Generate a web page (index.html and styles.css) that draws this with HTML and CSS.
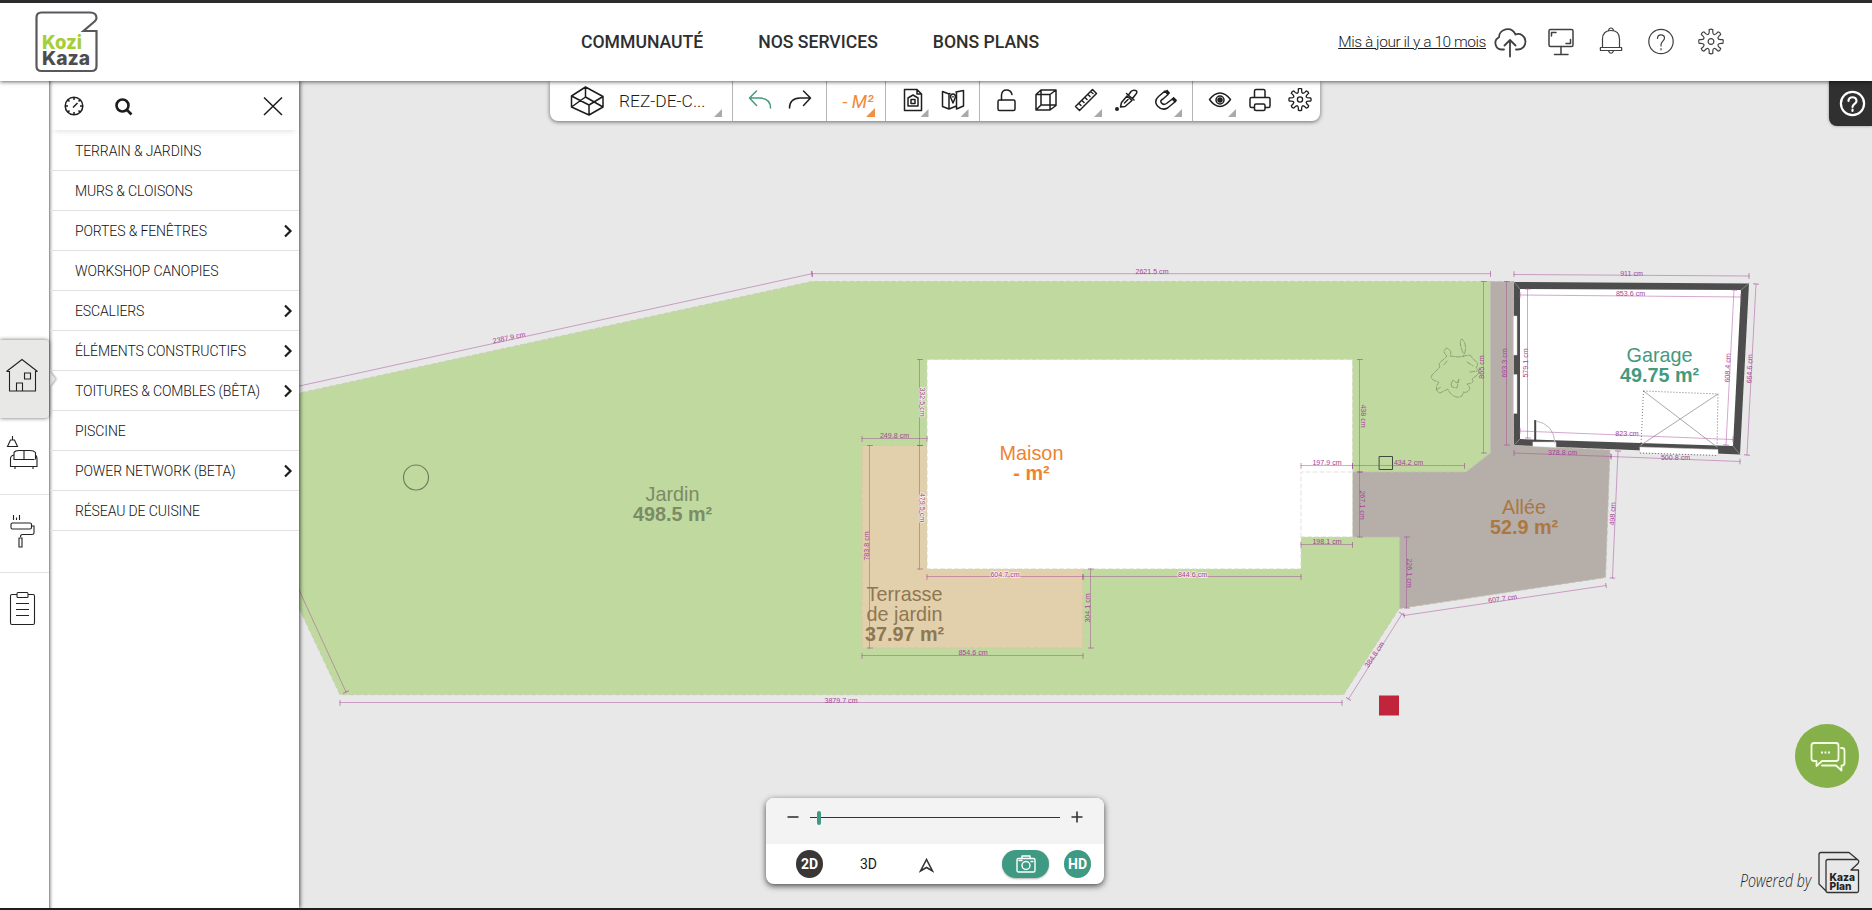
FILE: index.html
```html
<!DOCTYPE html>
<html lang="fr">
<head>
<meta charset="utf-8">
<title>Kozikaza - Plan</title>
<link rel="stylesheet" href="styles.css">
</head>
<body>
<svg class="defs" aria-hidden="true">
  <symbol id="gear" viewBox="-14 -14 28 28">
    <path d="M1.88-11.85C1.33-6.26 3.49-5.37 7.05-9.71Q9.2-9.2 9.71-7.05C5.37-3.49 6.26-1.33 11.85-1.88Q13 0 11.85 1.88C6.26 1.33 5.37 3.49 9.71 7.05Q9.2 9.2 7.05 9.71C3.49 5.37 1.33 6.26 1.88 11.85Q0 13-1.88 11.85C-1.33 6.26-3.49 5.37-7.05 9.71Q-9.2 9.2-9.71 7.05C-5.37 3.49-6.26 1.33-11.85 1.88Q-13 0-11.85-1.88C-6.26-1.33-5.37-3.49-9.71-7.05Q-9.2-9.2-7.05-9.71C-3.49-5.37-1.33-6.26-1.88-11.85Q0-13 1.88-11.85Z"/>
    <circle r="2.9"/>
  </symbol>
  <symbol id="chevron" viewBox="0 0 10 14"><path d="M2 1.500L7.500 7L2 12.500"/></symbol>
</svg>

<header class="header">
  <svg class="logo" width="64" height="64" viewBox="35 10 64 64">
    <path class="logo-frame" d="M83.500 31L96.500 31V66Q96.500 71 91.500 71H41.500Q36.500 71 36.500 66V17.500Q36.500 12.500 41.500 12.500H90Q96.500 12.500 96.500 18Q96.500 20 94.500 21.500Z"/>
    <text class="logo-text logo-green" x="42" y="49" textLength="40" lengthAdjust="spacingAndGlyphs">Kozi</text>
    <text class="logo-text logo-grey" x="42" y="64.500" textLength="48" lengthAdjust="spacingAndGlyphs">Kaza</text>
  </svg>
  <nav class="nav">
    <a>COMMUNAUTÉ</a><a>NOS SERVICES</a><a>BONS PLANS</a>
  </nav>
  <div class="account">
    <a class="updated">Mis à jour il y a 10 mois</a>
    <svg class="cloud" width="34" height="32" viewBox="0 0 34 32"><path d="M11 23.500H8.500A6.500 6.500 0 0 1 6 11.200C6 3.500 18-1 22.500 8.500C27 6.500 32.500 10 32.500 15.500C32.500 20 29.500 23.500 25 23.500H23M17 30.500V14.500M11.500 19.500L17 14L22.500 19.500"/></svg>
    <svg class="icon-thin bold" width="50" height="32" viewBox="0 0 50 32"><rect x="13" y="4.500" width="24" height="17" rx="1.500"/><path d="M25 21.500V29.500M18.500 29.500H32M15.500 11V7.500H20M34.500 14.500V18.500H30"/></svg>
    <svg class="icon-thin" width="50" height="32" viewBox="0 0 50 32"><path d="M14.500 22.500H35.500Q36 24 35.500 25.500H14.500Q14 24 14.500 22.500ZM16.500 22.500V14C16.500 8 20 5.500 25 5.500S33.500 8 33.500 14V22.500M22.500 5.500Q23 3 25 3T27.500 5.500M22.500 26Q25 30.500 27.500 26"/></svg>
    <svg class="icon-thin" width="50" height="32" viewBox="0 0 50 32"><circle cx="25" cy="16.500" r="12.200"/><path d="M21.500 13.500C21.500 8.500 28.500 9 28.500 13C28.500 16 25 16.500 25 20V21M25 23.500V24.800"/></svg>
    <svg class="icon-thin" width="50" height="32" viewBox="0 0 50 32"><use href="#gear" x="11" y="2.500" width="28" height="28"/></svg>
  </div>
</header>

<main class="workspace">
  <svg class="plan" viewBox="0 81 1872 827" width="1872" height="827">
    <defs>
      <marker id="tick" markerWidth="2" markerHeight="6" refX="1" refY="3" orient="auto" markerUnits="userSpaceOnUse"><path class="tick" d="M1 0V6"/></marker>
    </defs>
    <path class="garden" d="M240 406L812 281.500H1490.500V453L1466 472H1352.500V537H1399.500V608L1343.500 694.700H340L240 483Z"/>
    <path class="alley" d="M1490.500 281.500H1514V445L1610 450L1605.500 577.500L1399.500 608.500V537H1352.500V472H1466L1490.500 453Z"/>
    <path class="terrace" d="M862 445.500H927V569H1083V648H862Z"/>
    <path class="house" d="M927 359.500H1352.500V537H1301V569H927Z"/>
    <path class="notch" d="M1301 537V472H1352.500"/>

    <path class="wall" d="M1514 282L1749 283.500L1740 454.500L1514 445Z"/>
    <path class="room" d="M1520 289L1741 290L1733 446L1520 439Z"/>
    <path class="mitre" d="M1514 282L1520 289M1749 283.500L1741 290M1740 454.500L1733 446M1514 445L1520 439"/>
    <path class="opening" d="M1513.500 316H1517V355H1513.500ZM1513.500 374.500H1517V413.500H1513.500ZM1533 442H1556V447.500L1533 446.500ZM1640 447L1718 449.500V455.500L1640 453Z"/>
    <path class="leaf" d="M1535.200 420V441"/>
    <path class="swing" d="M1536 421Q1554 424 1555 443"/>
    <path class="cross" d="M1643.500 391L1717 447M1718 394L1641 445"/>
    <path class="dotted" d="M1643.500 391L1718 394L1717 448M1643.500 391L1641 446M1640 453L1718 455.500"/>

    <g class="tree">
      <path d="M1463 353Q1458 340 1462 339Q1467 344 1465 352L1463 357M1447 356Q1441 351 1447 348Q1453 351 1450 356L1458 357L1470 355L1474 360Q1480 363 1476 368Q1482 371 1476 376L1472 379Q1476 383 1467 384L1470 388Q1468 394 1463 392Q1464 398 1456 397Q1449 394 1448 389L1440 393Q1433 390 1439 382Q1429 380 1432 375L1440 367Q1437 364 1443 360Z"/>
      <path d="M1451 384L1453 380L1457 383L1459 379L1457 388L1452 387ZM1436 390L1441 387M1467 362L1473 366M1470 372L1477 371M1447 361L1443 366"/>
    </g>
    <circle class="marker" cx="416" cy="477.500" r="12.500"/>
    <rect class="post" x="1379.500" y="456.500" width="13" height="13"/>
    <rect class="red" x="1379" y="695.500" width="20" height="20"/>

    <g class="dim">
      <path d="M240 399L812 273.700"/><path d="M812 273.700H1490.500"/><path d="M276 540L346 692"/><path d="M340 702.500H1342"/>
      <path d="M1483.500 281.500V453"/><path d="M1506.500 281.500V445"/><path d="M1527.500 289V438"/>
      <path d="M1514 274.500L1749 276"/><path d="M1520 295L1741 297"/><path d="M1520 431L1733 439.500"/>
      <path d="M1734 290L1726 445"/><path d="M1756 284L1747 455"/><path d="M1514 453L1611 456.500"/><path d="M1611 456.500L1740 461.500"/>
      <path d="M1618 451L1612.500 578"/><path d="M1404 615.500L1606 585.500"/><path d="M1402 614L1348.500 699"/>
      <path d="M1406.500 537V608"/><path d="M1359.500 359.500V472"/><path d="M1359.500 472V537"/>
      <path d="M1301 465.500H1352.500"/><path d="M1352.500 465.500H1464.500"/><path d="M1301 544.500H1352.500"/>
      <path d="M919.500 359.500V445.500"/><path d="M919.500 445.500V569"/><path d="M862 438.500H927"/><path d="M869.500 445.500V648"/>
      <path d="M927 576.500H1083"/><path d="M1083 576.500H1301"/><path d="M1090.500 569V648"/><path d="M862 655.500H1083"/>
    </g>
    <g class="dim-text">
      <text transform="translate(509.500 340) rotate(-12.300)">2387.9 cm</text>
      <text x="1152" y="273.500">2621.5 cm</text>
      <text x="841" y="702.500">3879.7 cm</text>
      <text transform="translate(1483.500 367) rotate(-90)">865 cm</text>
      <text transform="translate(1506.500 363) rotate(-90)">693.3 cm</text>
      <text transform="translate(1528 363) rotate(-90)">579.1 cm</text>
      <text x="1631.500" y="275.500">911 cm</text>
      <text x="1630.500" y="296">853.6 cm</text>
      <text x="1627" y="435.500">823 cm</text>
      <text transform="translate(1730 368) rotate(-88)">608.4 cm</text>
      <text transform="translate(1752 369) rotate(-88)">664.6 cm</text>
      <text x="1562.500" y="455">378.8 cm</text>
      <text x="1675.500" y="459.500">500.8 cm</text>
      <text transform="translate(1615 514) rotate(-88)">498 cm</text>
      <text transform="translate(1503 601) rotate(-8)">607.7 cm</text>
      <text transform="translate(1376.500 656) rotate(-56)">384.8 cm</text>
      <text transform="translate(1406.500 573) rotate(90)">226.1 cm</text>
      <text transform="translate(1360.500 416) rotate(90)">438 cm</text>
      <text transform="translate(1360 505) rotate(90)">267.1 cm</text>
      <text x="1327" y="465">197.9 cm</text>
      <text x="1408.500" y="465">434.2 cm</text>
      <text x="1327" y="544">198.1 cm</text>
      <text class="halo" transform="translate(920 402) rotate(90)">332.5 cm</text>
      <text class="halo" transform="translate(920 507.500) rotate(90)">479.5 cm</text>
      <text x="894.500" y="437.500">249.8 cm</text>
      <text transform="translate(869 546) rotate(-90)">783.8 cm</text>
      <text class="halo" x="1005" y="576.500">604.7 cm</text>
      <text class="halo" x="1192.500" y="576.500">844.6 cm</text>
      <text transform="translate(1090 608) rotate(-90)">304.1 cm</text>
      <text x="973" y="655">854.6 cm</text>
    </g>
    <g class="label">
      <g class="l-garden"><text x="672.500" y="501">Jardin</text><text class="area" x="672.500" y="521">498.5 m²</text></g>
      <g class="l-house"><text x="1031.500" y="460">Maison</text><text class="area" x="1031.500" y="480">- m²</text></g>
      <g class="l-terrace"><text x="904.500" y="601">Terrasse</text><text x="904.500" y="621">de jardin</text><text class="area" x="904.500" y="641">37.97 m²</text></g>
      <g class="l-alley"><text x="1524" y="513.500">Allée</text><text class="area" x="1524" y="533.500">52.9 m²</text></g>
      <g class="l-garage"><text x="1659.500" y="362">Garage</text><text class="area" x="1659.500" y="382">49.75 m²</text></g>
    </g>
  </svg>

  <aside class="rail">
    <a class="rail-item active"><svg width="34" height="36" viewBox="0 0 34 36"><path d="M1.500 14.500L17 2.500L32.500 14.500M1.500 14.500H4.500V34H30.500V14.500H32.500M11.500 34V26H17.500V34M19.500 16H25.500V22H19.500Z"/></svg></a>
    <a class="rail-item sofa"><svg width="34" height="36" viewBox="0 0 34 36"><path d="M7.500 1V5M5.500 5H9.500L12.500 11.500H2.500ZM9 24.500V17.500Q10 15.500 14 15.500H25Q29 15.500 30.500 17.500V24.500M8.500 24.500H29.500M19 15.500V24.500M9 20Q5.500 20.500 5.500 24V31.500H32V24Q32 20.500 30 20M10 31.500V34M28 31.500V34"/></svg></a>
    <a class="rail-item"><svg width="34" height="36" viewBox="0 0 34 36"><path d="M8.500 2V7M11.500 4.500V7M14.500 2V7M7.500 10H25Q26.500 10 26.500 11.500V14.500Q26.500 16 25 16H7.500Q6 16 6 14.500V11.500Q6 10 7.500 10ZM26.500 13H29V20Q29 21.500 27 21.500H17.500Q15.500 21.500 15.500 24M14 25H17V34H14Z"/></svg></a>
    <a class="rail-item"><svg width="34" height="36" viewBox="0 0 34 36"><path d="M12 3.500H7Q5.500 3.500 5.500 5V32Q5.500 33.500 7 33.500H28Q29.500 33.500 29.500 32V5Q29.500 3.500 28 3.500H23M13 1.500H22Q23 1.500 23 3V5.500Q23 6.500 22 6.500H13Q12 6.500 12 5.500V3Q12 1.500 13 1.500ZM11 12.500H24M11 18.500H24M11 24.500H24"/></svg></a>
  </aside>

  <section class="panel">
    <svg class="notch-arrow" width="7" height="14" viewBox="0 0 7 14"><path d="M0 0L5.500 7L0 14Z"/></svg>
    <div class="panel-head">
      <svg width="20" height="20" viewBox="0 0 20 20"><circle cx="10" cy="10" r="8.800"/><path d="M9 11.500L13.500 7M10 1V4M10 16V19M1 10H4M16 10H19M4 4L5.500 5.500M16 4L14.500 5.500M4 16L5.500 14.500M16 16L14.500 14.500"/></svg>
      <svg class="search" width="18" height="18" viewBox="0 0 18 18"><circle cx="7.500" cy="7.500" r="6"/><path d="M12 12L16.500 16.500"/></svg>
      <svg class="close" width="20" height="20" viewBox="0 0 20 20"><path d="M1 1.500L19 19M19 1.500L1 19"/></svg>
    </div>
    <ul class="menu">
      <li>TERRAIN &amp; JARDINS</li>
      <li>MURS &amp; CLOISONS</li>
      <li>PORTES &amp; FENÊTRES<svg><use href="#chevron"/></svg></li>
      <li>WORKSHOP CANOPIES</li>
      <li>ESCALIERS<svg><use href="#chevron"/></svg></li>
      <li>ÉLÉMENTS CONSTRUCTIFS<svg><use href="#chevron"/></svg></li>
      <li>TOITURES &amp; COMBLES (BÊTA)<svg><use href="#chevron"/></svg></li>
      <li>PISCINE</li>
      <li>POWER NETWORK (BETA)<svg><use href="#chevron"/></svg></li>
      <li>RÉSEAU DE CUISINE</li>
    </ul>
  </section>

  <div class="toolbar">
    <div class="group level">
      <svg width="34" height="32" viewBox="0 0 34 32"><path d="M15.500 2L33 11.500V22L19 30L1.500 22V11L15.500 2V12L33 22M1.500 11L19 20V30M33 11.500L19 20M1.500 22L15.500 12"/></svg>
      <span>REZ-DE-C...</span><i class="corner"></i>
    </div>
    <div class="group">
      <a class="tool undo"><svg viewBox="0 0 24 24"><path d="M8.500 3L1.500 10L8.500 17.500M2 10H12Q22.500 10.500 22.500 20"/></svg></a>
      <a class="tool"><svg viewBox="0 0 24 24"><path d="M15.500 3L22.500 10L15.500 17.500M22 10H12Q1.500 10.500 1.500 20"/></svg></a>
    </div>
    <div class="group surface"><span>- M²</span><i class="corner"></i></div>
    <div class="group">
      <a class="tool"><svg viewBox="0 0 24 24"><path d="M3.500 1.500H16L20.500 6V22.500H3.500ZM16 1.500V6H20.500M7 10L12 7L17 10V18H7Z"/><rect x="10" y="11.500" width="4" height="4"/></svg><i class="corner"></i></a>
      <a class="tool"><svg viewBox="0 0 24 24"><path d="M1.500 3.500L8 6V21L1.500 18.500ZM8 6L9 5.500M15 4L22.500 2.500V18L15.500 21V5M8 21L15.500 18"/><path d="M12 15L9.500 9Q9.500 6 12 6T14.500 9ZM12 8.500V9"/></svg><i class="corner"></i></a>
    </div>
    <div class="group edit">
      <a class="tool"><svg viewBox="0 0 24 24"><rect x="4" y="12" width="17" height="10.500" rx="1.500"/><path d="M7.500 12V7Q8 2 12.500 2T18 6.500"/></svg></a>
      <a class="tool"><svg viewBox="0 0 24 24"><path d="M2 6.500H16V22H2ZM2 6.500L7 2H22L16 6.500M22 2V17.500L16 22M7 2V17H22M2 22L7 17"/></svg></a>
      <a class="tool"><svg viewBox="0 0 24 24"><path d="M1.500 18.500L18.500 1.500L22.500 5.500L5.500 22.500ZM5 15.500L7 17.500M8 12.500L10 14.500M11 9.500L13 11.500M14 6.500L16 8.500M17 4L19 5.500"/></svg><i class="corner"></i></a>
      <a class="tool"><svg viewBox="0 0 24 24"><path d="M13 8L18 12.500L11 18.500L6.500 19L7.500 14.500ZM12.500 5.500L20 12M14.500 7L17 3.500Q19 1.500 21.500 2.500T22 6L18.500 10.500M10.500 15L14 11.500"/><circle cx="3" cy="21" r="1" stroke-width="2"/></svg></a>
      <a class="tool"><svg viewBox="0 0 24 24"><path d="M11 3L4.500 8.500Q-.500 13 3.500 18Q8 23 13.500 20L21.500 13.500L19 10.500L12.500 15.500Q9.500 17.500 7.500 15T9 11L14 6.500Z"/><path stroke-width="3.200" stroke-linecap="butt" d="M12 2.500L15 6M18.500 10L22 13.500"/></svg><i class="corner"></i></a>
    </div>
    <div class="group last">
      <a class="tool"><svg viewBox="0 0 24 24"><path d="M1.500 11.500Q6.500 5 12 5T22.500 11.500Q17.500 18.500 12 18.500T1.500 11.500Z"/><circle cx="12" cy="12" r="4"/><circle cx="12" cy="12" r="1.500" stroke-width="2.500"/></svg><i class="corner"></i></a>
      <a class="tool"><svg viewBox="0 0 24 24"><path d="M6.500 9.500V3Q6.500 1.500 8 1.500H15.500Q17 1.500 17 3V9.500M6.500 19.500H3.500Q2 19.500 2 18V11Q2 9.500 3.500 9.500H20.500Q22 9.500 22 11V18Q22 19.500 20.500 19.500H17M6.500 22V17.500Q6.500 16 8 16H15.500Q17 16 17 17.500V21Q17 22.500 15.500 22.500H8Q6.500 22.500 6.500 21Z"/></svg></a>
      <a class="tool"><svg viewBox="0 0 24 24"><use href="#gear" x="-.500" y="-1" width="25" height="25"/></svg></a>
    </div>
  </div>

  <a class="help"><svg width="27" height="27" viewBox="0 0 27 27"><circle cx="13.500" cy="13.500" r="11.600"/><path d="M9.500 11C9.500 6 17.500 6 17.500 11C17.500 14 13.500 13.800 13.500 17M13.500 19.500V21"/></svg></a>

  <div class="viewer">
    <div class="zoom">
      <svg width="12" height="12" viewBox="0 0 12 12"><path d="M.500 6H11.500"/></svg>
      <div class="track"><i class="thumb"></i></div>
      <svg width="12" height="12" viewBox="0 0 12 12"><path d="M.500 6H11.500M6 .500V11.500"/></svg>
    </div>
    <div class="modes">
      <b class="disc dark">2D</b>
      <span class="mode">3D</span>
      <svg class="view" width="15" height="15" viewBox="0 0 15 15"><path d="M7.500 1.500L1.500 13L7.500 9.500L13.500 13Z"/></svg>
      <a class="camera"><svg width="20" height="18" viewBox="0 0 20 18"><rect x="1" y="3.500" width="18" height="13.500" rx="1.500"/><path d="M6 3.500V1H14V3.500M3 5.500H6M15 6.500H17"/><circle cx="10" cy="10.500" r="4"/></svg></a>
      <b class="disc">HD</b>
    </div>
  </div>

  <a class="chat"><svg width="36" height="32" viewBox="0 0 36 32"><path d="M4 2H26Q28.500 2 28.500 4.500V17.500Q28.500 20 26 20H12L6.500 25V20H4Q1.500 20 1.500 17.500V4.500Q1.500 2 4 2ZM31 7H32Q34.500 7 34.500 9.500V22Q34.500 24.500 32 24.500H31.500V29.500L26 24.500H12"/><path class="dots" d="M11 11.500H13M14.500 11.500H16.500M18 11.500H20"/></svg></a>

  <svg class="powered" width="124" height="48" viewBox="1738 848 124 48">
    <text class="hand" x="1740" y="887" textLength="71" lengthAdjust="spacingAndGlyphs">Powered by</text>
    <path d="M1851 870L1858.500 870V891Q1858.500 892.500 1857 892.500H1828Q1826 892.500 1826 890.500V861.500Q1826 859.500 1828 859.500H1857Q1860 860.500 1858 863.500L1851 870M1826 891L1819 884V854.500Q1819 852.500 1821 852.500H1849L1858 860"/>
    <text class="kp" x="1829.500" y="880.500" textLength="25.500" lengthAdjust="spacingAndGlyphs">Kaza</text>
    <text class="kp" x="1829.500" y="889.500" textLength="22" lengthAdjust="spacingAndGlyphs">Plan</text>
  </svg>
</main>
</body>
</html>
```
FILE: styles.css
```css
* { box-sizing: border-box; }
body {
  margin: 0;
  width: 1872px;
  height: 910px;
  overflow: hidden;
  display: flex;
  flex-direction: column;
  border-top: 3px solid #2b2b2d;
  border-bottom: 2px solid #1f1f22;
  font-family: Roboto, sans-serif;
  color: #1a1a1a;
  background: #e8e8e8;
}
svg { fill: none; stroke-linecap: round; stroke-linejoin: round; flex: none; }
.defs { position: absolute; width: 0; height: 0; }

/* Header */
.header {
  position: relative;
  z-index: 5;
  height: 78px;
  flex: none;
  display: flex;
  padding-left: 35px;
  background: #fff;
  box-shadow: 0 1px 4px rgba(0, 0, 0, .6);
}
.logo { margin-top: 7px; }
.logo-frame { stroke: #58585a; stroke-width: 2.2; stroke-linejoin: miter; }
.logo-text { font: 800 19px Inter, sans-serif; }
.logo-green { fill: #a6ce39; }
.logo-grey { fill: #4d4d4f; }
.nav { display: flex; gap: 55px; margin-left: 482px; padding-top: 28px; font-size: 17.600px; font-weight: 500; line-height: 22px; color: #2e2f30; white-space: nowrap; }
.account { display: flex; margin-left: auto; padding: 22px 136px 0 0; height: 60px; }
.updated { font-size: 15.500px; font-weight: 300; letter-spacing: -.45px; line-height: 20px; padding-top: 7px; margin-right: 7px; text-decoration: underline; white-space: nowrap; }
.cloud { stroke: #404040; stroke-width: 1.8; margin: 1px 9px 0 0; }
.icon-thin { stroke: #404040; stroke-width: 1.2; }
.icon-thin.bold { stroke-width: 1.500; }

/* Workspace */
.workspace { position: relative; flex: 1; display: flex; min-height: 0; }
.plan { position: absolute; left: 0; top: 0; }
.garden { fill: #bfd99f; stroke: #c9cdb8; stroke-dasharray: 4 3; }
.alley { fill: #b6aea9; stroke: #c2bdb5; stroke-dasharray: 4 3; }
.terrace { fill: #e1d0ab; stroke: #cfc9a4; stroke-dasharray: 4 3; }
.house { fill: #fff; stroke: #d5dac8; stroke-dasharray: 4 3; }
.notch { stroke: #e3dfe0; stroke-dasharray: 4 3; }
.wall { fill: #4d4d4d; }
.room, .opening { fill: #fff; }
.opening { stroke: #ccc; stroke-width: .5; }
.mitre { stroke: #999; stroke-width: .7; }
.leaf { stroke: #444; stroke-width: 2; stroke-linecap: butt; }
.swing { stroke: #bbb; }
.cross { stroke: #aaa; }
.dotted { stroke: #777; stroke-dasharray: 1 2; stroke-linecap: butt; }
.tree { stroke: #8ba579; stroke-width: 1; stroke-dasharray: 5 1.500; }
.marker { stroke: #6e7f60; stroke-width: 1.2; }
.post { stroke: #3f4a42; }
.red { fill: #c1253c; }
.dim path { stroke: #a54a9a; stroke-opacity: .48; stroke-width: 1; marker-start: url(#tick); marker-end: url(#tick); }
.tick { stroke: #a54a9a; stroke-opacity: .6; }
.dim-text { font: 7.100px "Liberation Sans", Arial, sans-serif; fill: #a8439a; text-anchor: middle; }
.halo { paint-order: stroke; stroke: rgba(255, 255, 255, .6); stroke-width: 2px; }
.label { font: 19.800px "Liberation Sans", Arial, sans-serif; text-anchor: middle; }
.area { font-weight: 700; }
.l-garden { fill: #7b8b66; }
.l-house { fill: #ee8330; }
.l-terrace { fill: #8f7752; }
.l-alley { fill: #ac7740; }
.l-garage { fill: #44997f; }

/* Category rail */
.rail {
  position: relative;
  z-index: 2;
  width: 49px;
  padding-top: 259px;
  display: flex;
  flex-direction: column;
  background: #fff;
}
.rail-item { height: 78px; flex: none; display: flex; align-items: flex-start; padding: 18px 0 0 4.500px; border-bottom: 1px solid #e2e2e2; }
.rail-item:last-child { border-bottom: 0; }
.rail-item svg { stroke: #222; stroke-width: 1.1; stroke-linecap: butt; stroke-linejoin: miter; }
.rail-item.active { background: #e8e9e6; padding-top: 17px; border-radius: 0 4px 4px 0; border: 0; box-shadow: 0 0 4px rgba(0, 0, 0, .6); }
.rail-item.sofa { height: 77px; padding-top: 17px; }

/* Menu panel */
.panel { position: relative; z-index: 1; width: 250px; background: #fff; border-left: 1px solid #999; box-shadow: inset 3px 0 3px -2px rgba(0, 0, 0, .35), 1px 0 4px rgba(0, 0, 0, .7); }
.notch-arrow { position: absolute; left: 0; top: 291px; fill: #e8e9e6; filter: drop-shadow(1px 0 1px rgba(0, 0, 0, .4)); }
.panel-head { height: 49px; display: flex; align-items: center; padding: 1px 16px 0 13.500px; box-shadow: 0 5px 6px -4px rgba(0, 0, 0, .13); }
.panel-head svg { stroke: #1c1c1c; stroke-width: 1.500; stroke-linecap: butt; }
.panel-head .search { margin-left: 31px; margin-top: 2px; stroke-width: 2.600; }
.panel-head .close { margin-left: auto; }
.menu { list-style: none; margin: 0; padding: 1px 0 0; }
.menu li { height: 40px; border-bottom: 1px solid #e1e1e1; padding: 1px 6px 0 25px; display: flex; align-items: center; justify-content: space-between; font-size: 14px; font-weight: 300; letter-spacing: -.12px; color: #111; white-space: nowrap; }
.menu svg { width: 10px; height: 14px; stroke: #1c1c1c; stroke-width: 2.200; stroke-linecap: butt; stroke-linejoin: miter; }

/* Drawing toolbar */
.toolbar {
  position: absolute;
  left: 550px;
  top: 0;
  height: 40px;
  display: flex;
  background: #fff;
  border-radius: 0 0 8px 8px;
  box-shadow: 0 1px 4px rgba(0, 0, 0, .55);
}
.group { position: relative; display: flex; padding: 0 6.500px; border-right: 1px solid #b5b5b5; }
.group.edit { padding: 0 6px 0 6px; }
.group.last { border: 0; padding: 0 0 0 7px; }
.level { width: 183px; align-items: center; padding: 0 0 0 20px; gap: 15px; font-size: 17.400px; font-weight: 300; white-space: nowrap; }
.level svg { stroke: #1c1c1c; stroke-width: 1.500; }
.level .corner { right: 10px; }
.tool { position: relative; width: 40px; display: flex; justify-content: center; padding-top: 7px; }
.tool svg { width: 24px; height: 24px; stroke: #1f1f1f; stroke-width: 1.500; }
.tool.undo svg { stroke: #44997f; }
.corner { position: absolute; right: 4px; bottom: 4px; width: 8px; height: 8px; background: #aaa; clip-path: polygon(100% 0, 100% 100%, 0 100%); }
.surface { width: 59px; padding: 0 0 0 4px; justify-content: center; align-items: center; font-size: 18px; font-style: italic; color: #ef8a37; white-space: nowrap; }
.surface .corner { right: 10px; width: 9px; height: 9px; background: #f09040; }

.help { position: absolute; right: 0; top: 0; width: 43px; height: 45px; display: flex; align-items: center; padding-left: 10px; background: #303030; border-radius: 0 0 0 8px; box-shadow: 0 0 3px rgba(0, 0, 0, .4); }
.help svg { stroke: #fff; stroke-width: 2.200; }

/* Zoom and view mode */
.viewer { position: absolute; left: 766px; top: 717px; width: 338px; height: 86px; border-radius: 8px; background: #fff; box-shadow: 0 2px 6px rgba(0, 0, 0, .7); }
.zoom { height: 46px; display: flex; align-items: flex-start; gap: 11px; padding: 13px 20px 0 21px; background: #f3f3f3; border-radius: 8px 8px 0 0; }
.zoom svg, .view { stroke: #333; stroke-width: 1.600; stroke-linecap: butt; }
.track { position: relative; width: 250px; height: 1px; margin-top: 6px; background: #333; }
.thumb { position: absolute; left: 7px; top: -6.500px; width: 4px; height: 14px; border-radius: 2px; background: #3f9a83; }
.modes { height: 40px; display: flex; align-items: center; padding: 0 13px 0 30px; font-size: 14px; }
.disc { width: 27px; height: 28px; border-radius: 50%; display: flex; align-items: center; justify-content: center; color: #fff; background: #3f9a83; font-weight: 700; }
.disc.dark { background: #383636; }
.mode { width: 18px; margin-left: 37px; }
.view { margin: 2px 0 0 41px; stroke-linejoin: miter; }
.camera { width: 47px; height: 28px; margin: 0 15px 0 auto; border-radius: 14px; display: flex; align-items: center; justify-content: center; background: #3f9a83; box-shadow: 0 1px 2px rgba(0, 0, 0, .3); }
.camera svg { stroke: #fff; stroke-width: 1.400; }

.chat { position: absolute; left: 1795px; top: 643px; width: 64px; height: 64px; border-radius: 50%; display: flex; align-items: center; justify-content: center; padding: 2px 0 0 2px; background: #86b049; }
.chat svg { stroke: #f4ffe2; stroke-width: 1.800; }
.chat .dots { stroke-linecap: butt; stroke-width: 2; }
.powered { position: absolute; left: 1738px; top: 767px; stroke: #333; stroke-width: 1.300; }
.hand { font: italic 300 19px "Open Sans", sans-serif; fill: #222; stroke: none; }
.kp { font: 800 10.500px Inter, sans-serif; fill: #222; stroke: none; }
```
